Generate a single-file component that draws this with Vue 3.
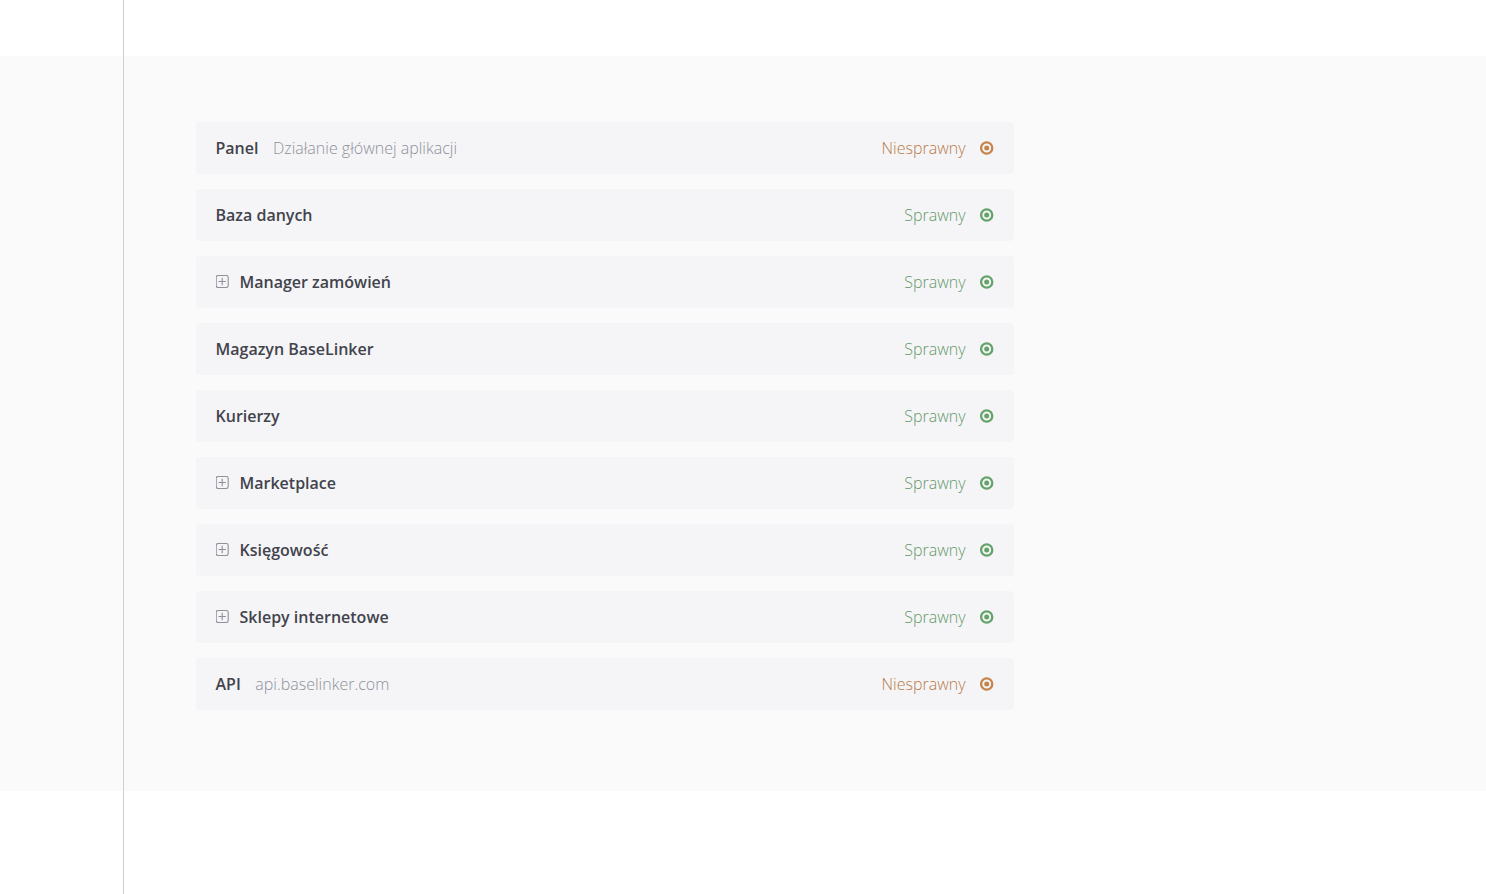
<script setup>
const rows = [
  { name: 'Panel', desc: 'Działanie głównej aplikacji', ok: false },
  { name: 'Baza danych', ok: true },
  { name: 'Manager zamówień', ok: true, expand: true },
  { name: 'Magazyn BaseLinker', ok: true },
  { name: 'Kurierzy', ok: true },
  { name: 'Marketplace', ok: true, expand: true },
  { name: 'Księgowość', ok: true, expand: true },
  { name: 'Sklepy internetowe', ok: true, expand: true },
  { name: 'API', desc: 'api.baselinker.com', ok: false },
]
</script>

<template>
  <div class="page">
    <div class="rule"></div>
    <section class="band">
      <ul class="list">
        <li v-for="r in rows" :key="r.name" class="row">
          <svg v-if="r.expand" class="plus" width="13" height="13" viewBox="0 0 13 13" fill="none" stroke="#8f919b" stroke-width="1.1">
            <rect x="0.2" y="0.5" width="12" height="12" rx="2" />
            <path d="M6.2 2.8v7.4M2.5 6.5h7.4" />
          </svg>
          <span class="name">{{ r.name }}</span>
          <span v-if="r.desc" class="desc">{{ r.desc }}</span>
          <span class="status" :class="r.ok ? 'ok' : 'bad'">{{ r.ok ? 'Sprawny' : 'Niesprawny' }}</span>
          <svg class="dot" :class="r.ok ? 'ok' : 'bad'" width="14" height="14" viewBox="0 0 14 14">
            <circle cx="6.7" cy="7" r="5.6" fill="none" stroke="currentColor" stroke-width="2.3" />
            <circle cx="6.7" cy="7" r="2.5" fill="currentColor" />
          </svg>
        </li>
      </ul>
    </section>
  </div>
</template>

<style scoped>
.page {
  position: relative;
  height: 894px;
  padding-top: 56px;
  box-sizing: border-box;
  background: #fff;
  font-family: "Open Sans", "Liberation Sans", sans-serif;
  overflow: hidden;
}
.rule {
  position: absolute;
  left: 123px;
  top: 0;
  bottom: 0;
  width: 1px;
  background: #cfcfd1;
}
.band {
  height: 735px;
  box-sizing: border-box;
  padding: 66px 0 0 196px;
  background: #fafafb;
}
.list {
  width: 818px;
  margin: 0;
  padding: 0;
  list-style: none;
  display: flex;
  flex-direction: column;
  gap: 15px;
}
.row {
  height: 52px;
  box-sizing: border-box;
  padding: 0 20px 0 19.5px;
  display: flex;
  align-items: center;
  background: #f5f5f7;
  border-radius: 4px;
  font-size: 16px;
}
.plus {
  margin-right: 11px;
  margin-top: -1px;
  flex: none;
}
.name {
  font-weight: 600;
  color: #42434c;
}
.desc {
  margin-left: 14.5px;
  font-weight: 300;
  color: #8e909a;
}
.status {
  margin-left: auto;
  font-weight: 300;
}
.status.ok { color: #64996a; }
.status.bad { color: #b87a48; }
.dot {
  margin-left: 14.5px;
  flex: none;
}
.dot.ok { color: #64a369; }
.dot.bad { color: #c4854c; }
</style>

<style>
html, body { margin: 0; background: #fff; }
</style>
